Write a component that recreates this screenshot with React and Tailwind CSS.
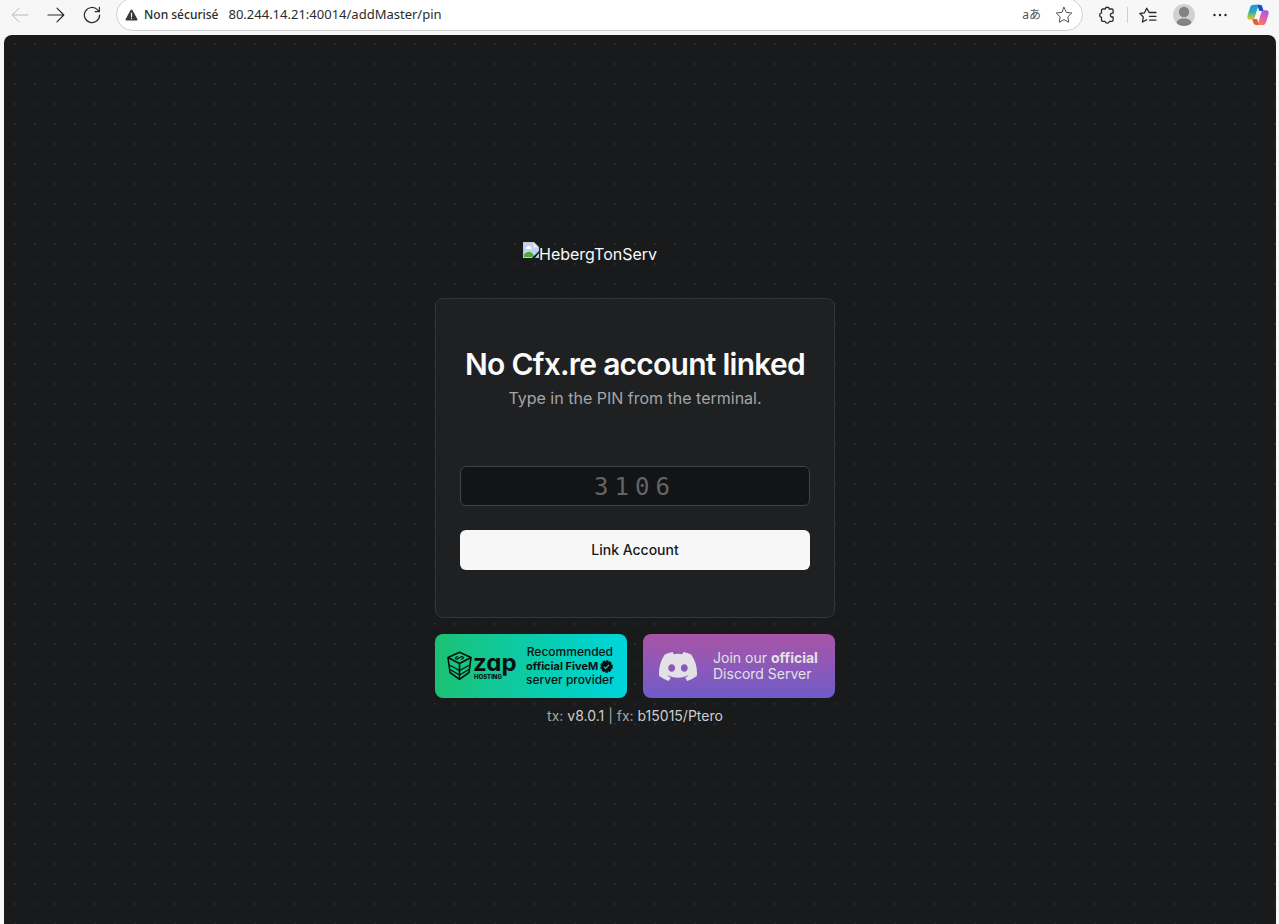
import React from 'react';

const iconProps = {
  fill: 'none',
  stroke: 'currentColor',
  strokeLinecap: 'round',
  strokeLinejoin: 'round',
};

const BackIcon = () => (
  <svg width="18" height="16" viewBox="0 0 18 16" {...iconProps}>
    <path d="M17 8H1.5M8 1.2 1.2 8 8 14.8" />
  </svg>
);

const ForwardIcon = () => (
  <svg width="18" height="16" viewBox="0 0 18 16" strokeWidth="1.2" {...iconProps}>
    <path d="M1 8h15.5M10 1.2 16.8 8 10 14.8" />
  </svg>
);

const ReloadIcon = () => (
  <svg width="18" height="18" viewBox="0 0 18 18" strokeWidth="1.2" {...iconProps}>
    <path d="M16.6 9A7.6 7.6 0 1 1 14.6 3.9L16.4 5.6M16.4 1.4v4.2h-4.3" />
  </svg>
);

const WarningIcon = () => (
  <svg width="13" height="12" viewBox="0 0 13 12" className="shrink-0">
    <path d="M5.6 1c.4-.8 1.4-.8 1.8 0l4.9 8.9c.4.8-.1 1.7-1 1.7H1.700c-.9 0-1.400-.9-1-1.700z" fill="#3a3a3a" />
    <path d="M6.500 4.200v3.300M6.500 9.200v.4" stroke="#fff" strokeWidth="1.200" strokeLinecap="round" />
  </svg>
);

const StarIcon = () => (
  <svg width="18" height="18" viewBox="0 0 18 18" {...iconProps}>
    <path d="m9 1.300 2.300 5 5.500.7-4 3.800 1 5.500L9 13.600l-4.800 2.700 1-5.500-4-3.800 5.500-.7z" />
  </svg>
);

const PuzzleIcon = () => (
  <svg width="16" height="18" viewBox="0 0 16 18" strokeWidth="1.3" {...iconProps}>
    <path d="M3.800 3h2.300a2.200 2.200 0 0 1 4.300 0h2.400c.8 0 1.300.5 1.300 1.300v2.900h-.8a1.900 1.900 0 0 0 0 3.800h.8v3c0 .8-.5 1.300-1.300 1.300h-2.400a2.200 2.200 0 0 1-4.300 0H3.800c-.8 0-1.300-.5-1.300-1.300v-2.600a2.300 2.300 0 0 1 0-4.500V4.300c0-.8.500-1.300 1.300-1.300z" />
  </svg>
);

const FavoritesIcon = () => (
  <svg width="18" height="17" viewBox="0 0 18 17" strokeWidth="1.3" {...iconProps}>
    <path d="M10 5.300 7.700 1.300 5.500 5.800.9 6.500l3.400 3.400-.8 5.100 4.200-2.300M10.500 5.500h6.500M10.500 9.300h6.500M10.500 13.100h6.500" />
  </svg>
);

const AvatarIcon = () => (
  <svg width="22" height="22" viewBox="0 0 22 22">
    <clipPath id="avatar">
      <circle cx="11" cy="11" r="11" />
    </clipPath>
    <g clipPath="url(#avatar)">
      <rect width="22" height="22" fill="#d2d1cf" />
      <circle cx="11" cy="8" r="5.200" fill="#858381" />
      <path d="M3.500 20c0-4 3-5.500 7.500-5.500s7.500 1.500 7.500 5.500L15 22H7z" fill="#858381" />
    </g>
  </svg>
);

const MoreIcon = () => (
  <svg width="14" height="4" viewBox="0 0 14 4" fill="#222">
    <circle cx="1.500" cy="2" r="1.200" />
    <circle cx="7" cy="2" r="1.200" />
    <circle cx="12.500" cy="2" r="1.200" />
  </svg>
);

const CopilotIcon = () => (
  <svg width="22" height="22" viewBox="0 0 22 22">
    <defs>
      <linearGradient id="copilotLeft" x1="0" y1="0" x2="0" y2="1">
        <stop offset="0" stopColor="#1b9de2" />
        <stop offset=".45" stopColor="#28a9bb" />
        <stop offset=".75" stopColor="#8fc54b" />
        <stop offset="1" stopColor="#f5bb26" />
      </linearGradient>
      <linearGradient id="copilotRight" x1=".7" y1="0" x2=".3" y2="1">
        <stop offset="0" stopColor="#a65ce8" />
        <stop offset=".5" stopColor="#e35bb0" />
        <stop offset="1" stopColor="#f77d52" />
      </linearGradient>
    </defs>
    <path d="M15.500 3.200C15 1.500 14.200.8 12.500.8H9.500l3 6.200h4.200z" fill="#1b4fc4" />
    <path d="M6.300 18.600c.5 1.700 1.300 2.500 3 2.500h2.900L10 15H5z" fill="#ee5638" />
    <path d="M11.500.8H6.500C4.600.8 3.500 2 2.900 4L.6 11.500C-.2 14.200.8 15.600 3 15.600h2c1.500 0 2.300-.8 2.800-2.400L10.500 4c.4-1.500.5-2.600 1-3.200z" fill="url(#copilotLeft)" />
    <path d="M10.500 21.100h5c1.900 0 3-1.200 3.600-3.200l2.300-7.500c.8-2.700-.2-4.100-2.400-4.100h-2c-1.500 0-2.300.8-2.800 2.400l-2.700 9.200c-.4 1.500-.5 2.600-1 3.200z" fill="url(#copilotRight)" />
  </svg>
);

const BrokenImageIcon = () => (
  <svg width="16" height="16" viewBox="0 0 16 16" className="shrink-0">
    <path d="M0 0h11l5 5v11H0z" fill="#c8c8c8" />
    <path d="M1 1h9.500v4.500H15V15H1z" fill="#bfd3f5" />
    <path d="M3 6.500a1.400 1.400 0 0 1 1.500-1.700 1.800 1.800 0 0 1 3.300.4 1 1 0 0 1 .2 1.800H3.500z" fill="#fff" />
    <path d="M1 15v-2.500C4 9.500 7 8.800 9.500 11.500L12 15z" fill="#54a83b" />
    <path d="M9 16 16 9v2l-4 5z" fill="#191a1b" />
    <path d="M10.500 1v4.500H15z" fill="#f2f2f2" />
  </svg>
);

const ZapLogo = () => (
  <svg width="71" height="30" viewBox="0 0 71 30" fill="none" stroke="#08110f">
    <g strokeWidth="1.600" strokeLinejoin="round">
      <path d="M12.500 1.200 24 6.500l-2 15-9.500 6.800L3 21.500l-2-15z" />
      <path d="M1 6.500l11.500 6 11.500-6M12.500 12.500v15.800" />
      <path d="m2.300 14 10.200 5.500L22.700 14" strokeWidth="1.300" />
      <path d="m3 18.500 9.500 5.500 9.500-5.500" strokeWidth="1.300" />
      <path d="M10.800 5.300 9 6.500c-1 .8-.3 2 1 1.700l4-2.400c1.300-.6 3 .6 2 1.600l-1.800 1.100" strokeWidth="1.200" />
    </g>
    <g fill="#08110f" stroke="none" fontFamily="Inter, sans-serif">
      <text x="26" y="20" fontSize="24" fontWeight="700" className="[font-feature-settings:'cv11']">zap</text>
      <text x="27" y="28" fontSize="6" fontWeight="800">HOSTING</text>
    </g>
  </svg>
);

const VerifiedIcon = () => (
  <svg width="13" height="13" viewBox="0 0 13 13" className="shrink-0">
    <circle cx="6.500" cy="6.500" r="5.300" fill="#08110f" stroke="#08110f" strokeWidth="2" strokeDasharray="2.400 1" />
    <path d="m4 6.700 1.800 1.700L9 4.900" fill="none" stroke="#09cfc9" strokeWidth="1.200" />
  </svg>
);

const DiscordIcon = () => (
  <svg width="38" height="29" viewBox="0 0 127.140 96.360" className="shrink-0" fill="#e3e1e6">
    <path d="M107.700 8.070A105.150 105.150 0 0 0 81.470 0a72.060 72.060 0 0 0-3.360 6.830 97.680 97.680 0 0 0-29.110 0A72.370 72.370 0 0 0 45.640 0a105.890 105.890 0 0 0-26.250 8.090C2.790 32.650-1.710 56.600.54 80.210a105.730 105.730 0 0 0 32.170 16.150 77.700 77.700 0 0 0 6.890-11.110 68.420 68.420 0 0 1-10.850-5.180c.91-.66 1.800-1.340 2.660-2a75.570 75.570 0 0 0 64.320 0c.87.710 1.760 1.390 2.660 2a68.680 68.680 0 0 1-10.870 5.190 77 77 0 0 0 6.890 11.100 105.250 105.250 0 0 0 32.190-16.140c2.640-27.380-4.510-51.110-18.900-72.150zM42.450 65.690C36.180 65.690 31 60 31 53s5-12.740 11.430-12.740S54 46 53.890 53s-5.050 12.690-11.440 12.690zm42.240 0C78.410 65.690 73.250 60 73.250 53s5-12.740 11.440-12.740S96.230 46 96.120 53s-5.040 12.690-11.430 12.690z" />
  </svg>
);

const BrowserBar = () => (
  <header className="flex h-[35px] items-start justify-between bg-[#f7f7f7] pl-[11px] pr-2.5 font-['Noto_Sans',sans-serif] text-[#2b2b2b]">
    <nav className="flex h-[30px] items-center gap-[18px]">
      <button type="button" aria-label="Back" className="text-[#b9b9b9]"><BackIcon /></button>
      <button type="button" aria-label="Forward"><ForwardIcon /></button>
      <button type="button" aria-label="Reload"><ReloadIcon /></button>
    </nav>
    <div className="-mt-0.5 ml-[15px] flex h-[33px] flex-1 items-center rounded-full border border-[#cfcfcf] bg-white pl-2 pr-[9px]">
      <WarningIcon />
      <span className="ml-1.5 whitespace-nowrap text-xs font-medium">Non sécurisé</span>
      <input
        type="text"
        aria-label="Address"
        defaultValue="80.244.14.21:40014/addMaster/pin"
        className="ml-2.5 min-w-0 flex-1 bg-transparent text-[13px] outline-none"
      />
      <button type="button" aria-label="Translate" className="mr-3.5 font-['Noto_Sans','Noto_Sans_CJK_JP',sans-serif] text-xs text-[#555]">aあ</button>
      <button type="button" aria-label="Add to favorites" className="text-[#555]"><StarIcon /></button>
    </div>
    <div className="ml-4 flex h-[30px] items-center">
      <button type="button" aria-label="Extensions"><PuzzleIcon /></button>
      <span className="ml-3 h-4 w-px bg-[#cfcfcf]" />
      <button type="button" aria-label="Favorites" className="ml-[11px]"><FavoritesIcon /></button>
      <button type="button" aria-label="Profile" className="ml-4"><AvatarIcon /></button>
      <button type="button" aria-label="More" className="ml-[18px]"><MoreIcon /></button>
      <button type="button" aria-label="Copilot" className="ml-5"><CopilotIcon /></button>
    </div>
  </header>
);

const LinkAccountCard = () => (
  <form
    onSubmit={(e) => e.preventDefault()}
    className="flex w-full flex-col rounded-lg border border-[#333537] bg-[#202224]/80 px-6 py-[47px] text-center"
  >
    <h1 className="whitespace-nowrap text-3xl font-semibold tracking-tight text-[#fafafa]">No Cfx.re account linked</h1>
    <p className="mt-1 text-base text-[#a5a6a7]">Type in the PIN from the terminal.</p>
    <input
      type="text"
      aria-label="PIN"
      placeholder="3106"
      className="mt-14 h-10 w-full rounded-md border border-[#414345] bg-[#131415] pt-0.5 text-center font-['DejaVu_Sans_Mono',monospace] text-2xl tracking-[6px] outline-none placeholder:text-[#626466]"
    />
    <button type="submit" className="mt-6 h-10 w-full rounded-md bg-[#f7f7f7] text-sm font-medium text-[#18191b]">
      Link Account
    </button>
  </form>
);

const ZapBanner = () => (
  <a href="#zap" className="flex h-16 items-center rounded-lg bg-linear-to-r from-[#1bc173] to-[#00d5dc] pl-3 text-[#08110f]">
    <ZapLogo />
    <span className="ml-2 whitespace-nowrap text-center text-xs font-medium leading-[14px]">
      Recommended
      <span className="flex items-center gap-0.5 text-[11px] font-bold">official FiveM <VerifiedIcon /></span>
      server provider
    </span>
  </a>
);

const DiscordBanner = () => (
  <a href="#discord" className="flex h-16 items-center rounded-lg bg-linear-to-b from-[#a853a6] to-[#6f5bc9] pl-4 text-[#e3e1e6]">
    <DiscordIcon />
    <span className="ml-4 whitespace-nowrap text-sm leading-4">
      Join our <b>official</b>
      <br />
      Discord Server
    </span>
  </a>
);

export default function App() {
  return (
    <div className="flex min-h-screen flex-col bg-[#f7f7f7]">
      <BrowserBar />
      <main className="ml-1 mr-[3px] flex flex-1 flex-col items-center rounded-t-lg bg-[#191a1b] bg-[radial-gradient(circle,#282a2c_1px,transparent_1px)] bg-[length:20px_20px] bg-[position:1px_-1px] pr-2.5 pt-[207px] font-['Inter',sans-serif]">
        <div className="flex w-full max-w-[400px] flex-col items-center">
          <div role="img" aria-label="HebergTonServ" className="mb-8 flex w-56 text-base text-[#fafafa]">
            <BrokenImageIcon />
            HebergTonServ
          </div>
          <LinkAccountCard />
          <div className="mt-4 grid w-full grid-cols-2 gap-4">
            <ZapBanner />
            <DiscordBanner />
          </div>
          <p className="mt-2 text-sm text-[#a5a6a7]">
            tx: <span className="text-[#cdcecf]">v8.0.1</span> | fx: <span className="text-[#cdcecf]">b15015/Ptero</span>
          </p>
        </div>
      </main>
    </div>
  );
}
